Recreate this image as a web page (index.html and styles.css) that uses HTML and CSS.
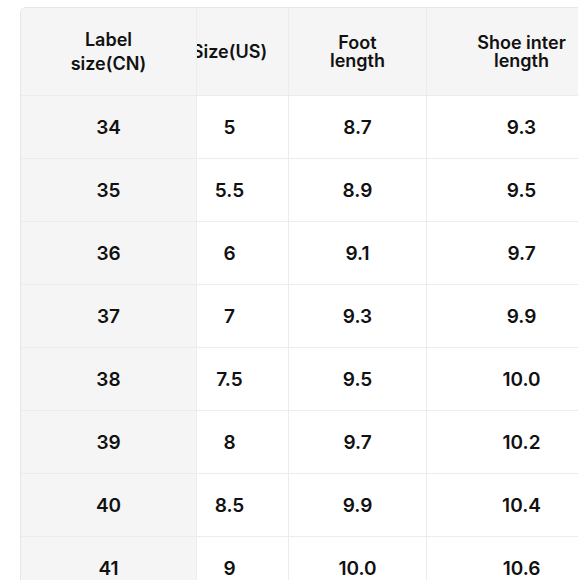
FILE: index.html
```html
<!DOCTYPE html>
<html>
<head>
<meta charset="utf-8">
<link rel="stylesheet" href="styles.css">
</head>
<body>
<div class="chart">
  <div class="cell head first tall"><span>Label<br>size(CN)</span></div>
  <div class="cell head us"><span class="shift">Size(US)</span></div>
  <div class="cell head"><span>Foot<br>length</span></div>
  <div class="cell head last"><span>Shoe inter<br>length</span></div>

  <div class="cell first">34</div><div class="cell us"><span class="shift">5</span></div><div class="cell">8.7</div><div class="cell last">9.3</div>
  <div class="cell first">35</div><div class="cell us"><span class="shift">5.5</span></div><div class="cell">8.9</div><div class="cell last">9.5</div>
  <div class="cell first">36</div><div class="cell us"><span class="shift">6</span></div><div class="cell">9.1</div><div class="cell last">9.7</div>
  <div class="cell first">37</div><div class="cell us"><span class="shift">7</span></div><div class="cell">9.3</div><div class="cell last">9.9</div>
  <div class="cell first">38</div><div class="cell us"><span class="shift">7.5</span></div><div class="cell">9.5</div><div class="cell last">10.0</div>
  <div class="cell first">39</div><div class="cell us"><span class="shift">8</span></div><div class="cell">9.7</div><div class="cell last">10.2</div>
  <div class="cell first">40</div><div class="cell us"><span class="shift">8.5</span></div><div class="cell">9.9</div><div class="cell last">10.4</div>
  <div class="cell first">41</div><div class="cell us"><span class="shift">9</span></div><div class="cell">10.0</div><div class="cell last">10.6</div>
</div>
</body>
</html>
```
FILE: styles.css
```css
html, body {
  margin: 0;
  padding: 0;
  overflow: hidden;
  background: #ffffff;
}
body {
  font-family: Inter, "Noto Sans", sans-serif;
  color: #111111;
}
.chart {
  margin: 7px 0 0 20px;
  width: 558px;
  display: grid;
  grid-template-columns: 176px 92px 138px 152px;
  grid-template-rows: 88px repeat(8, 63px);
  border-left: 1px solid #e6e6e6;
  border-top: 1px solid #e6e6e6;
  border-top-left-radius: 6px;
  overflow: hidden;
  box-sizing: border-box;
}
.cell {
  box-sizing: border-box;
  border-right: 1px solid #ececec;
  border-bottom: 1px solid #ececec;
  display: flex;
  align-items: center;
  justify-content: center;
  text-align: center;
  font-size: 19px;
  font-weight: 600;
  background: #ffffff;
  overflow: hidden;
}
.head {
  background: #f5f5f5;
  font-size: 18px;
  line-height: 18px;
}
.head.tall {
  line-height: 24px;
}
.first {
  background: #f5f5f5;
}
.us .shift {
  display: block;
  flex: none;
  margin-left: -26px;
  width: 117px;
  text-align: center;
}
.last {
  padding-left: 38px;
}
```
